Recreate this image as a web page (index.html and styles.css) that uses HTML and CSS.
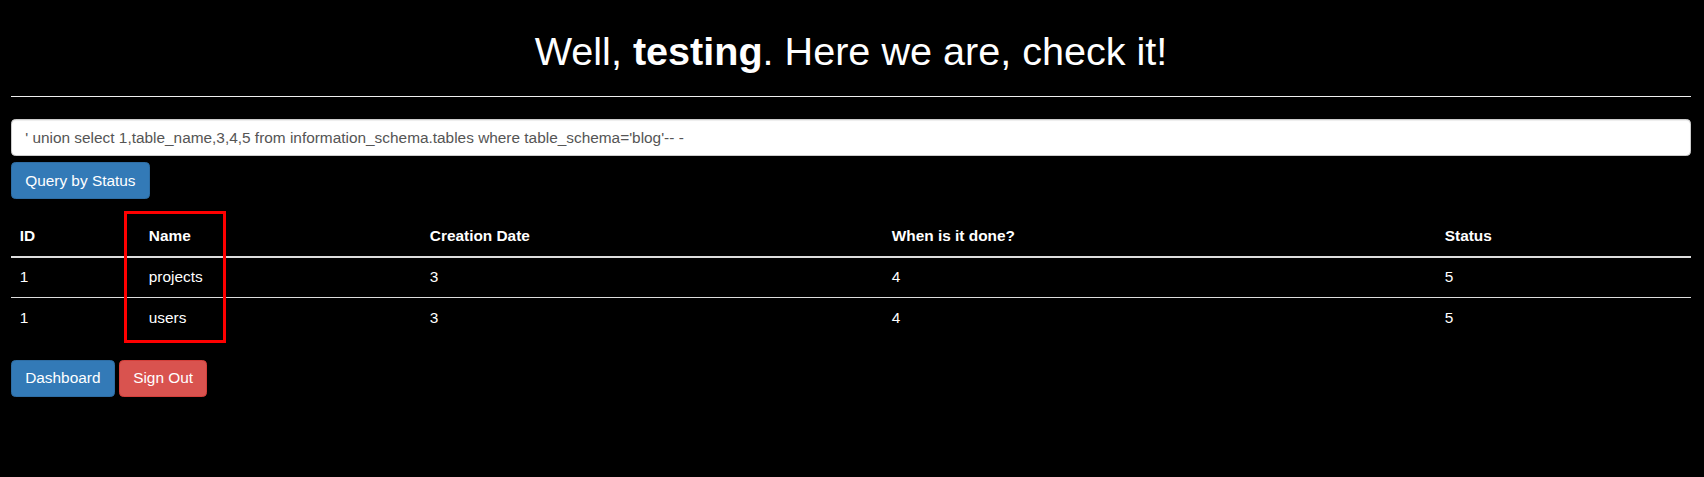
FILE: index.html
```html
<!DOCTYPE html>
<html lang="en">
<head>
<meta charset="utf-8">
<title>Dashboard</title>
<link rel="stylesheet" href="styles.css">
</head>
<body>
<div class="page">
  <h1 class="title">Well, <b>testing</b>. Here we are, check it!</h1>
  <hr class="rule">
  <form class="query-form">
    <input class="form-control" type="text" value="' union select 1,table_name,3,4,5 from information_schema.tables where table_schema='blog'-- -">
    <button class="btn btn-primary" type="button">Query by Status</button>
  </form>
  <div class="table-wrap">
    <table class="table">
      <thead>
        <tr>
          <th class="col-id">ID</th>
          <th class="col-name">Name</th>
          <th class="col-date">Creation Date</th>
          <th class="col-done">When is it done?</th>
          <th class="col-status">Status</th>
        </tr>
      </thead>
      <tbody>
        <tr><td>1</td><td>projects</td><td>3</td><td>4</td><td>5</td></tr>
        <tr><td>1</td><td>users</td><td>3</td><td>4</td><td>5</td></tr>
      </tbody>
    </table>
    <div class="highlight"></div>
  </div>
  <div class="actions">
    <a class="btn btn-primary" href="#">Dashboard</a>
    <a class="btn btn-danger" href="#">Sign Out</a>
  </div>
</div>
</body>
</html>
```

FILE: styles.css
```css
* { box-sizing: border-box; }

html, body {
  margin: 0;
  padding: 0;
  background: #000;
}

body {
  font-family: "Liberation Sans", Arial, Helvetica, sans-serif;
  font-size: 15.4px;
  line-height: 22px;
  color: #fff;
}

.page {
  padding: 8.4px 13px 0 11px;
}

.title {
  margin: 22px 0 11px;
  font-size: 39.6px;
  line-height: 43.56px;
  font-weight: 400;
  text-align: center;
  color: #fff;
}

.title b { font-weight: 700; }

.rule {
  margin: 22px 0;
  border: 0;
  border-top: 1px solid #eee;
  height: 0;
}

.query-form {
  margin: 0;
}

.form-control {
  display: block;
  width: 100%;
  height: 37.4px;
  padding: 6.6px 13.2px;
  font-family: inherit;
  font-size: 15.4px;
  line-height: 22px;
  color: #555;
  background: #fff;
  border: 1px solid #ccc;
  border-radius: 4.4px;
  box-shadow: inset 0 1px 1px rgba(0,0,0,.075);
  margin: 0 0 5.6px;
}

.btn {
  display: inline-block;
  padding: 6.6px 13.2px;
  font-family: inherit;
  font-size: 15.4px;
  line-height: 22px;
  height: 37.4px;
  border: 1.1px solid transparent;
  border-radius: 4.4px;
  color: #fff;
  text-decoration: none;
  vertical-align: middle;
  cursor: pointer;
}

.btn-primary {
  background: #337ab7;
  border-color: #2e6da4;
}

.btn-danger {
  background: #d9534f;
  border-color: #d43f3a;
}

.table-wrap {
  position: relative;
  margin-top: 16.6px;
  margin-bottom: 22px;
}

.table {
  width: 100%;
  border-collapse: collapse;
  border-spacing: 0;
}

.table th,
.table td {
  padding: 8.8px;
  line-height: 22px;
  text-align: left;
  vertical-align: top;
}

.table th {
  font-weight: 700;
  vertical-align: bottom;
  border-bottom: 2px solid #ddd;
}

.table td {
  border-top: 1px solid #ddd;
}

.table tbody tr:first-child td { border-top: 0; }

.col-id { width: 129px; }
.col-name { width: 281px; }
.col-date { width: 462px; }
.col-done { width: 553px; }
.col-status { width: auto; }

.highlight {
  position: absolute;
  left: 113.3px;
  top: -5px;
  width: 101.4px;
  height: 132px;
  border: 3px solid #f00;
  pointer-events: none;
}

.actions {
  font-size: 15.4px;
}
```
